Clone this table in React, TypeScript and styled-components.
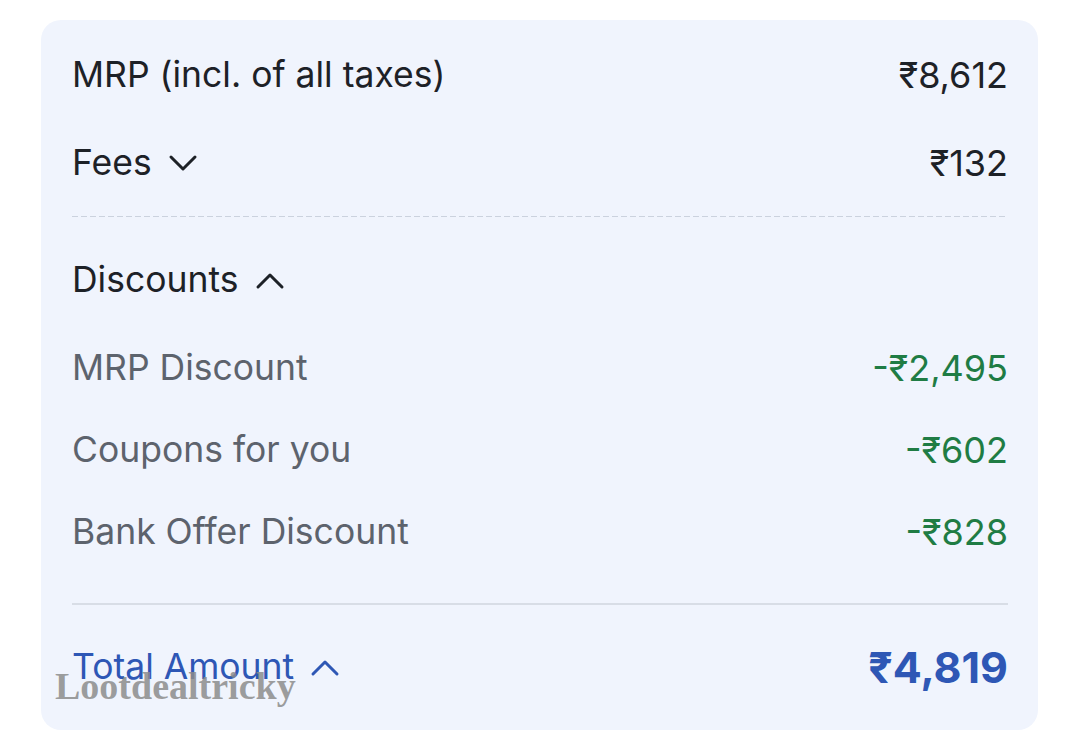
import React from "react";
import styled, { createGlobalStyle } from "styled-components";

const Global = createGlobalStyle`
  html, body { margin: 0; padding: 0; background: #ffffff; }
  body { font-family: Inter, "Noto Sans", sans-serif; }
`;

const Page = styled.div`
  padding: 20px 42px 0 41px;
`;

const Card = styled.section`
  position: relative;
  box-sizing: border-box;
  width: 997px;
  height: 710px;
  background: #f0f4fd;
  border-radius: 20px;
  padding: 31px 30px 0 31px;
  display: flex;
  flex-direction: column;
`;

const Row = styled.div<{ $mt?: number }>`
  display: flex;
  align-items: center;
  justify-content: space-between;
  height: 48px;
  margin-top: ${(p) => p.$mt ?? 0}px;
`;

const Label = styled.span<{ $tone?: "dark" | "muted" | "blue" }>`
  display: inline-flex;
  align-items: center;
  gap: 16px;
  font-size: 35.5px;
  line-height: 48px;
  color: ${(p) =>
    p.$tone === "muted" ? "#5d636d" : p.$tone === "blue" ? "#2e57b5" : "#1d2127"};
`;

const Value = styled.span<{ $tone?: "dark" | "green" | "blue" }>`
  font-size: ${(p) => (p.$tone === "blue" ? "43px" : "36px")};
  font-weight: ${(p) => (p.$tone === "blue" ? 700 : 400)};
  line-height: 48px;
  color: ${(p) =>
    p.$tone === "green" ? "#1f7c44" : p.$tone === "blue" ? "#2e57b5" : "#1d2127"};
`;

const Dashed = styled.div<{ $mt: number }>`
  height: 1px;
  margin-top: ${(p) => p.$mt}px;
  background: repeating-linear-gradient(
    to right,
    #cbd2de 0 6px,
    transparent 6px 9px
  );
`;

const Solid = styled.div<{ $mt: number }>`
  height: 2px;
  margin-top: ${(p) => p.$mt}px;
  background: #d8dde6;
`;

const Watermark = styled.span`
  position: absolute;
  left: 14px;
  top: 644px;
  font-family: "Liberation Serif", "DejaVu Serif", serif;
  font-weight: 700;
  font-size: 38px;
  color: rgba(140, 140, 140, 0.85);
  pointer-events: none;
`;

const Chevron = ({ up, color }: { up?: boolean; color: string }) => (
  <svg width="30" height="20" viewBox="0 0 30 20" fill="none">
    <path
      d={up ? "M3 17 L15 5 L27 17" : "M3 4 L15 16 L27 4"}
      stroke={color}
      strokeWidth="3"
      strokeLinecap="round"
      strokeLinejoin="round"
    />
  </svg>
);

export default function App() {
  return (
    <>
      <Global />
      <Page>
        <Card>
          <Row>
            <Label>MRP (incl. of all taxes)</Label>
            <Value>₹8,612</Value>
          </Row>
          <Row $mt={40}>
            <Label>
              Fees <Chevron color="#1d2127" />
            </Label>
            <Value>₹132</Value>
          </Row>
          <Dashed $mt={29} />
          <Row $mt={39}>
            <Label>
              Discounts <Chevron up color="#1d2127" />
            </Label>
          </Row>
          <Row $mt={40}>
            <Label $tone="muted">MRP Discount</Label>
            <Value $tone="green">-₹2,495</Value>
          </Row>
          <Row $mt={34}>
            <Label $tone="muted">Coupons for you</Label>
            <Value $tone="green">-₹602</Value>
          </Row>
          <Row $mt={34}>
            <Label $tone="muted">Bank Offer Discount</Label>
            <Value $tone="green">-₹828</Value>
          </Row>
          <Solid $mt={47} />
          <Row $mt={38}>
            <Label $tone="blue">
              Total Amount <Chevron up color="#2e57b5" />
            </Label>
            <Value $tone="blue">₹4,819</Value>
          </Row>
          <Watermark>Lootdealtricky</Watermark>
        </Card>
      </Page>
    </>
  );
}
